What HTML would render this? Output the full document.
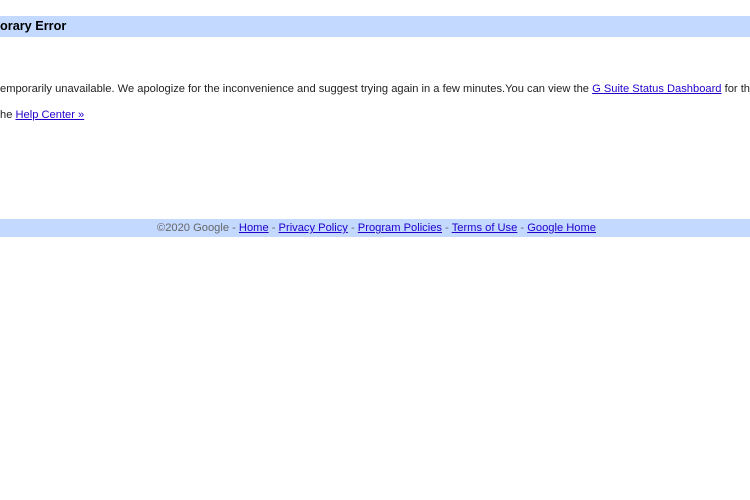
<!DOCTYPE html>
<html><head><meta charset="utf-8"><style>
html,body{margin:0;padding:0;width:750px;height:500px;overflow:hidden;background:#fff;font-family:"Liberation Sans",Arial,sans-serif;color:#222;}
.bar{position:absolute;left:0;width:750px;background:#c3d9ff;}
.t{position:absolute;white-space:nowrap;font-size:11.15px;}
.pre{position:absolute;right:100%;top:0;}
a{color:#20c;text-decoration:underline;}
.clip{position:absolute;left:0;top:0;width:750px;height:500px;overflow:hidden;}
</style></head><body>
<div class="clip">
<div class="bar" style="top:16px;height:21px;"></div>
<div class="t" style="left:0;top:19px;font-size:12.7px;font-weight:bold;color:#000;"><span class="pre">Temp</span>orary Error</div>
<div class="t" style="left:0;top:83px;"><span class="pre">This service is t</span>emporarily unavailable. We apologize for the inconvenience and suggest trying again in a few minutes.You can view the <a>G Suite Status Dashboard</a> for the latest status updates.</div>
<div class="t" style="left:0;top:109px;"><span class="pre">For more information, visit t</span>he <a>Help Center »</a></div>
<div class="bar" style="top:219px;height:18px;"></div>
<div class="t" style="left:157px;top:222px;color:#666;">©2020 Google - <a>Home</a> - <a>Privacy Policy</a> - <a>Program Policies</a> - <a>Terms of Use</a> - <a>Google Home</a></div>
</div>
</body></html>
